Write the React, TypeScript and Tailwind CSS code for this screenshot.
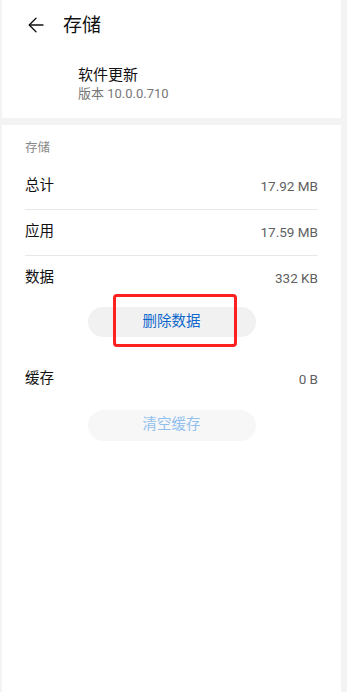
import React from 'react';

const font = "font-['Roboto','Noto_Sans_CJK_SC',sans-serif]";

interface RowProps {
    label: string;
    value: string;
    divider?: boolean;
}

const StorageRow: React.FC<RowProps> = ({ label, value, divider }) => (
    <div className={`h-[45px] flex items-center justify-between ${divider ? 'border-b border-[#e8e8e8] h-[46px]' : ''}`}>
        <span className="text-[14.5px] text-[#111] leading-none">{label}</span>
        <span className="text-[13.5px] text-[#5f5f5f] leading-none">{value}</span>
    </div>
);

export default function App() {
    return (
        <div className={`w-[347px] h-[692px] bg-[#f3f3f3] pl-[2px] pr-[6px] flex flex-col ${font}`}>
            {/* header card */}
            <div className="bg-white h-[118px] flex flex-col">
                <div className="h-[50px] flex items-center pl-[26px]">
                    <svg width="16" height="16" viewBox="0 0 16 16" fill="none" stroke="#111" strokeWidth="1.3" strokeLinecap="round" strokeLinejoin="round">
                        <path d="M15 8H1.5" />
                        <path d="M8 1.2L1.2 8L8 14.8" />
                    </svg>
                    <span className="ml-[19px] text-[19px] text-[#111] leading-none">存储</span>
                </div>
                <div className="pl-[76px] mt-[15px]">
                    <div className="text-[15px] leading-[20px] text-[#111]">软件更新</div>
                    <div className="text-[13px] leading-[18px] text-[#777]">版本 10.0.0.710</div>
                </div>
            </div>

            {/* storage card */}
            <div className="bg-white flex-1 mt-[7px] px-[23px]">
                <div className="pt-[13px] text-[12.5px] leading-[19px] text-[#888]">存储</div>
                <div className="mt-[7px]">
                    <StorageRow label="总计" value="17.92 MB" divider />
                    <StorageRow label="应用" value="17.59 MB" divider />
                    <StorageRow label="数据" value="332 KB" />
                </div>
                <div className="flex justify-center mt-[6px]">
                    <div className="relative w-[168px] h-[30px] rounded-full bg-[#f1f1f2] flex items-center justify-center">
                        <span className="text-[14.5px] text-[#0f67cc] leading-none">删除数据</span>
                        <div className="absolute left-[25px] top-[-13px] w-[124px] h-[53px] border-[3px] border-[#ff2020] rounded-[4px]" />
                    </div>
                </div>
                <div className="mt-[20px]">
                    <StorageRow label="缓存" value="0 B" />
                </div>
                <div className="flex justify-center mt-[8px]">
                    <div className="w-[168px] h-[31px] rounded-full bg-[#f7f7f8] flex items-center justify-center">
                        <span className="text-[14.5px] text-[#92c0ee] leading-none">清空缓存</span>
                    </div>
                </div>
            </div>
        </div>
    );
}
